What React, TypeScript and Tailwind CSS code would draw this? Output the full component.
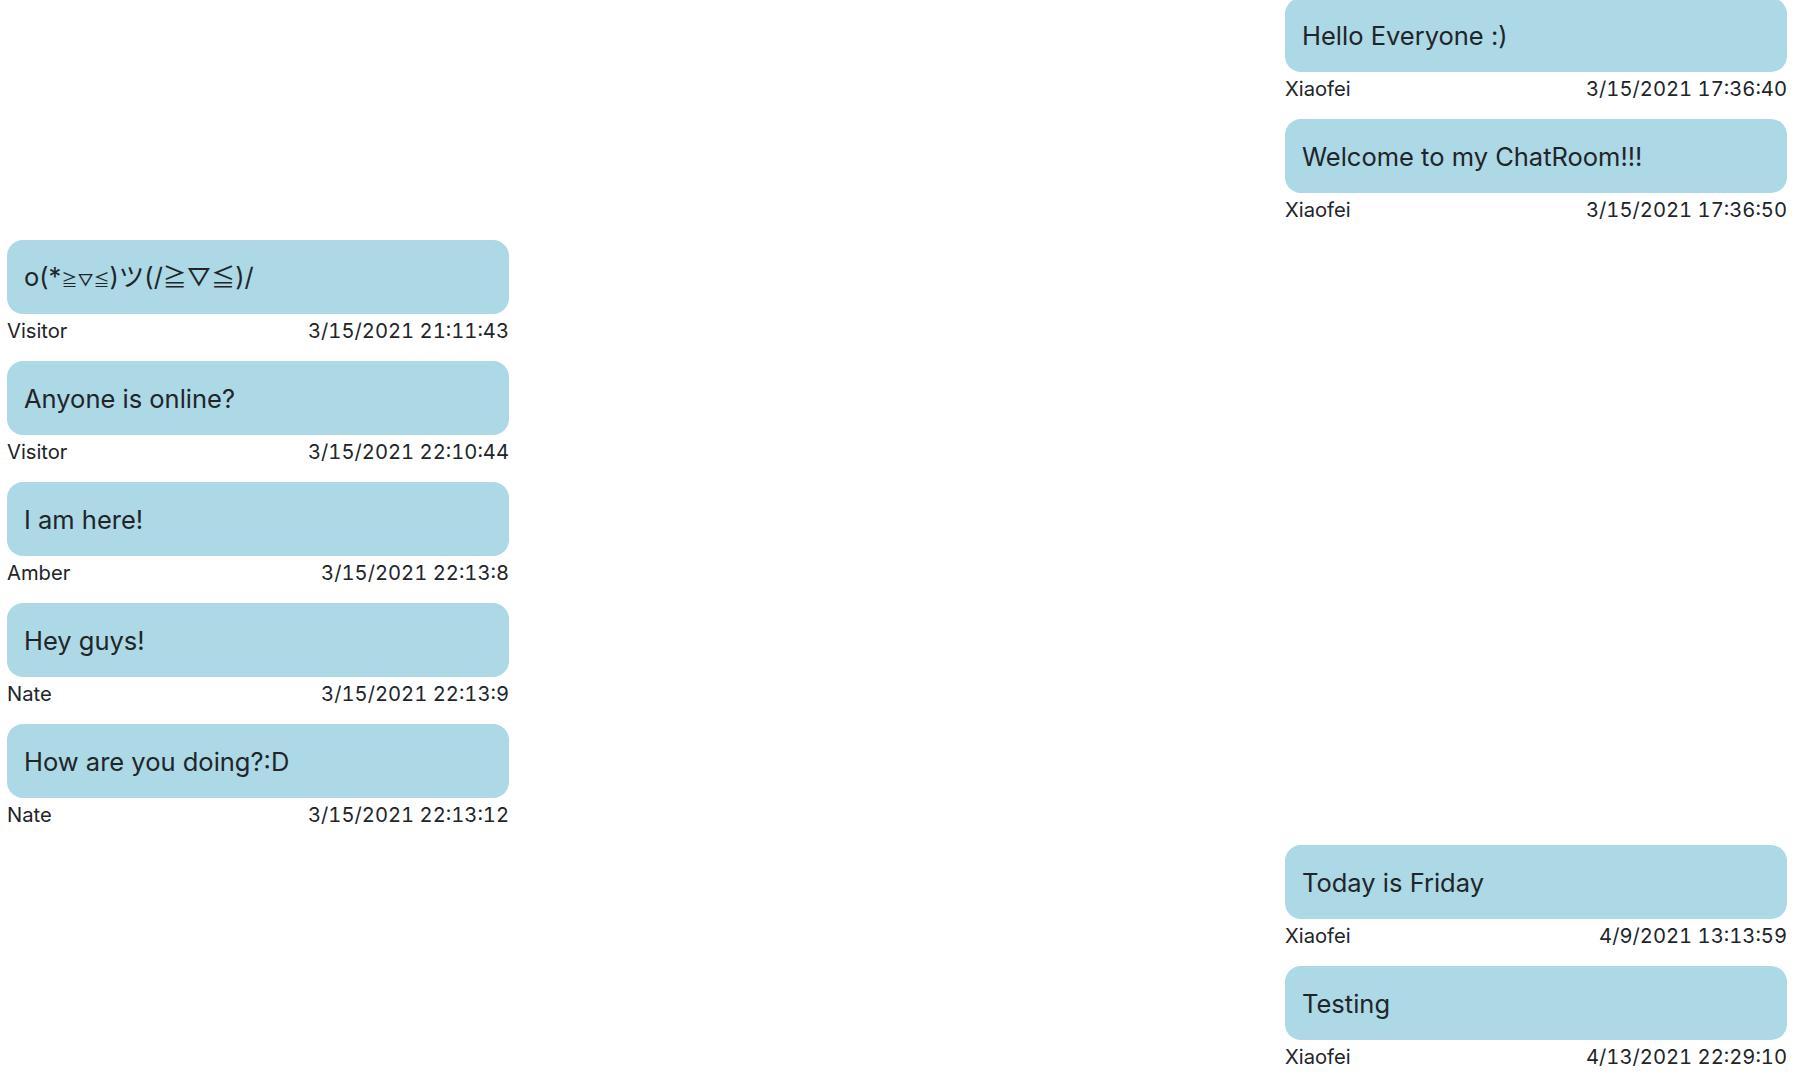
import React from "react";

type Msg = { text: React.ReactNode; user: string; time: string; mine: boolean };

const messages: Msg[] = [
  { text: "Hello Everyone :)", user: "Xiaofei", time: "3/15/2021 17:36:40", mine: true },
  { text: "Welcome to my ChatRoom!!!", user: "Xiaofei", time: "3/15/2021 17:36:50", mine: true },
  {
    text: (
      <>
        o(*<span className="text-[16px]">≧▽≦</span>)ツ(/<span className="text-[24px]">≧▽≦</span>)/
      </>
    ),
    user: "Visitor",
    time: "3/15/2021 21:11:43",
    mine: false,
  },
  { text: "Anyone is online?", user: "Visitor", time: "3/15/2021 22:10:44", mine: false },
  { text: "I am here!", user: "Amber", time: "3/15/2021 22:13:8", mine: false },
  { text: "Hey guys!", user: "Nate", time: "3/15/2021 22:13:9", mine: false },
  { text: "How are you doing?:D", user: "Nate", time: "3/15/2021 22:13:12", mine: false },
  { text: "Today is Friday", user: "Xiaofei", time: "4/9/2021 13:13:59", mine: true },
  { text: "Testing", user: "Xiaofei", time: "4/13/2021 22:29:10", mine: true },
];

function Message({ m }: { m: Msg }) {
  return (
    <div className={m.mine ? "flex w-[502px] flex-col self-end" : "flex w-[502px] flex-col self-start"}>
      <div className="flex h-[74px] items-center rounded-2xl bg-[#add8e6] px-[17px] pt-[2px] text-[25.5px] leading-[30px] text-[#212529]">
        <span>{m.text}</span>
      </div>
      <div className="mt-[1px] flex justify-between text-[20.2px] leading-[31px] text-[#212529] tabular-nums">
        <span>{m.user}</span>
        <span>{m.time}</span>
      </div>
    </div>
  );
}

export default function App() {
  return (
    <div className="flex h-screen flex-col justify-end overflow-hidden bg-white font-['Inter','Noto_Sans_CJK_JP',sans-serif]">
      <div className="flex flex-col gap-[15px] pb-[14px] pl-[7px] pr-[13px]">
        {messages.map((m, i) => (
          <Message key={i} m={m} />
        ))}
      </div>
    </div>
  );
}
